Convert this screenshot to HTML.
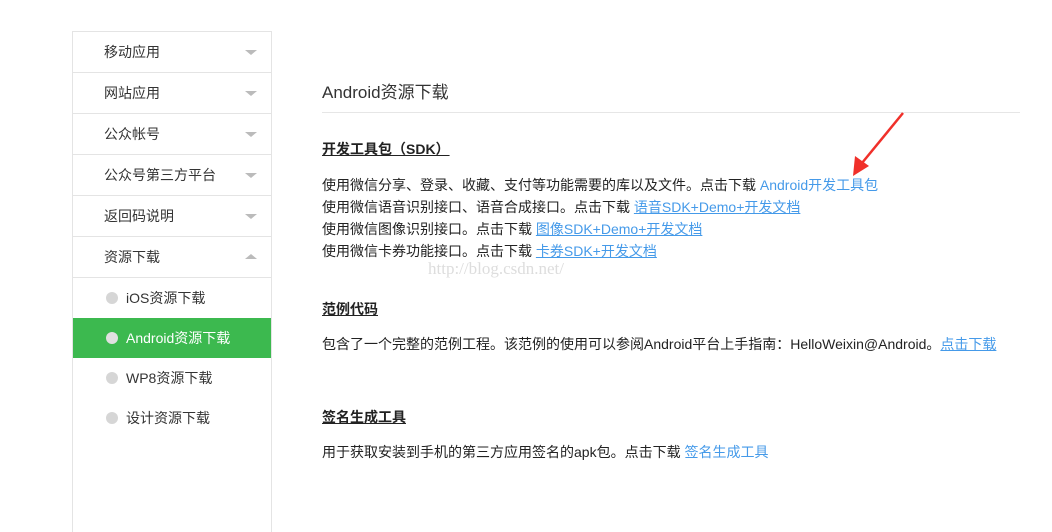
<!DOCTYPE html>
<html><head><meta charset="utf-8"><style>
body{margin:0;width:1052px;height:516px;background:#fff;font-family:"Liberation Sans","Noto Sans CJK SC",sans-serif;color:#222;position:relative;overflow:hidden}
.side{position:absolute;left:72px;top:31px;width:198px;height:500px;border-left:1px solid #e4e4e4;border-right:1px solid #e4e4e4;border-top:1px solid #e4e4e4}
.row{height:40px;border-bottom:1px solid #e4e4e4;position:relative;font-size:14px;line-height:40px;padding-left:31px;color:#333}
.row .ar{position:absolute;right:14px;top:18px;width:0;height:0;border-left:6px solid transparent;border-right:6px solid transparent;border-top:5px solid #bbb}
.row .up{border-top:none;border-bottom:5px solid #bbb;top:17px}
.sub{height:40px;line-height:40px;font-size:14px;padding-left:53px;position:relative;color:#333}
.sub:before{content:"";position:absolute;left:33px;top:14px;width:12px;height:12px;border-radius:50%;background:#d6d6d6}
.sub.on{background:#3cb94f;color:#fff}
.sub.on:before{background:#e0e0e0}
.c{position:absolute;left:322px;font-size:14px;white-space:nowrap}
a{color:#459ae9}
.u{text-decoration:underline}
h3{margin:0;font-size:14px;font-weight:bold;text-decoration:underline;color:#222}
</style></head><body>
<div class="side">
<div class="row">移动应用<span class="ar"></span></div>
<div class="row">网站应用<span class="ar"></span></div>
<div class="row">公众帐号<span class="ar"></span></div>
<div class="row">公众号第三方平台<span class="ar"></span></div>
<div class="row">返回码说明<span class="ar"></span></div>
<div class="row">资源下载<span class="ar up"></span></div>
<div class="sub">iOS资源下载</div>
<div class="sub on">Android资源下载</div>
<div class="sub">WP8资源下载</div>
<div class="sub">设计资源下载</div>
</div>
<div class="c" style="top:78px;font-size:17px;color:#333">Android资源下载</div>
<div style="position:absolute;left:322px;top:112px;width:698px;height:1px;background:#e6e6e6"></div>
<div class="c" style="top:139px"><h3>开发工具包（SDK）</h3></div>
<div class="c" style="top:174px;line-height:22px">使用微信分享、登录、收藏、支付等功能需要的库以及文件。点击下载 <span style="color:#459ae9">Android开发工具包</span><br>使用微信语音识别接口、语音合成接口。点击下载 <a class="u">语音SDK+Demo+开发文档</a><br>使用微信图像识别接口。点击下载 <a class="u">图像SDK+Demo+开发文档</a><br>使用微信卡券功能接口。点击下载 <a class="u">卡券SDK+开发文档</a></div>
<div style="position:absolute;left:428px;top:259px;font-family:'Liberation Serif',serif;font-size:17px;color:#ddd">http://blog.csdn.net/</div>
<div class="c" style="top:299px"><h3>范例代码</h3></div>
<div class="c" style="top:334px">包含了一个完整的范例工程。该范例的使用可以参阅Android平台上手指南：HelloWeixin@Android。<a class="u">点击下载</a></div>
<div class="c" style="top:407px"><h3>签名生成工具</h3></div>
<div class="c" style="top:442px">用于获取安装到手机的第三方应用签名的apk包。点击下载 <span style="color:#459ae9">签名生成工具</span></div>
<svg style="position:absolute;left:0;top:0" width="1052" height="516"><line x1="903" y1="113" x2="862" y2="163" stroke="#f0302a" stroke-width="2.5"/><polygon points="853,176 855,156 869,166" fill="#f0302a"/></svg>
</body></html>
